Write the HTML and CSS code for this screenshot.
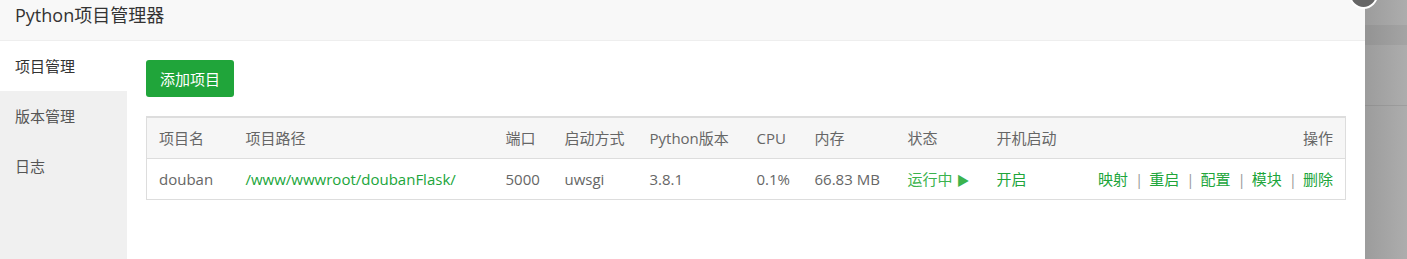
FILE: index.html
```html
<!DOCTYPE html>
<html lang="zh-CN">
<head>
    <meta charset="UTF-8">
    <meta name="viewport" content="width=device-width, initial-scale=1.0">
    <title>Python项目管理器</title>
    <link rel="stylesheet" href="styles.css">
</head>
<body>
    <div class="page">
        <div class="layer">
            <div class="layer-title">Python项目管理器</div>
            <div class="layer-body">
                <ul class="side-menu">
                    <li class="active">项目管理</li>
                    <li>版本管理</li>
                    <li>日志</li>
                </ul>
                <div class="main">
                    <button class="btn-add">添加项目</button>
                    <table class="project-table">
                        <thead>
                            <tr>
                                <th class="c-name">项目名</th>
                                <th class="c-path">项目路径</th>
                                <th class="c-port">端口</th>
                                <th class="c-run">启动方式</th>
                                <th class="c-ver">Python版本</th>
                                <th class="c-cpu">CPU</th>
                                <th class="c-mem">内存</th>
                                <th class="c-state">状态</th>
                                <th class="c-boot">开机启动</th>
                                <th class="c-ops">操作</th>
                            </tr>
                        </thead>
                        <tbody>
                            <tr>
                                <td>douban</td>
                                <td><a class="link" href="#">/www/wwwroot/doubanFlask/</a></td>
                                <td>5000</td>
                                <td>uwsgi</td>
                                <td>3.8.1</td>
                                <td>0.1%</td>
                                <td>66.83 MB</td>
                                <td><span class="running">运行中 <span class="play">&#9654;</span></span></td>
                                <td><a class="link" href="#">开启</a></td>
                                <td class="c-ops">
                                    <a class="link" href="#">映射</a><span class="sep">|</span><a class="link" href="#">重启</a><span class="sep">|</span><a class="link" href="#">配置</a><span class="sep">|</span><a class="link" href="#">模块</a><span class="sep">|</span><a class="link" href="#">删除</a>
                                </td>
                            </tr>
                        </tbody>
                    </table>
                </div>
            </div>
            <span class="layer-close"></span>
        </div>
        <div class="backdrop">
            <div class="bd-band"></div>
            <div class="bd-line"></div>
        </div>
    </div>
</body>
</html>
```

FILE: styles.css
```css
*{
    margin: 0;
    padding: 0;
    box-sizing: border-box;
}
body{
    font-family: "Open Sans", "Noto Sans CJK SC", sans-serif;
    font-size: 15px;
    color: #666;
    overflow: hidden;
}
.page{
    display: flex;
    height: 259px;
}
.layer{
    position: relative;
    z-index: 2;
    width: 1365px;
    background: #fff;
    display: flex;
    flex-direction: column;
}
.layer-title{
    height: 41px;
    line-height: 30px;
    padding-left: 15px;
    font-size: 18px;
    color: #333;
    background: #f8f8f8;
    border-bottom: 1px solid #eee;
}
.layer-close{
    position: absolute;
    top: -20px;
    right: -13px;
    width: 29px;
    height: 29px;
    border-radius: 50%;
    background: #666;
    border: 2px solid #fff;
}
.layer-body{
    flex: 1;
    display: flex;
}
.side-menu{
    list-style: none;
    width: 127px;
    background: #f0f0f0;
}
.side-menu li{
    height: 50px;
    line-height: 50px;
    padding-left: 15px;
    color: #555;
}
.side-menu li.active{
    background: #fff;
    color: #333;
}
.main{
    flex: 1;
    padding: 19px 19px 0 19px;
}
.btn-add{
    display: block;
    width: 88px;
    height: 37px;
    background: #20a53a;
    color: #fff;
    border: none;
    border-radius: 3px;
    font-family: inherit;
    font-size: 15px;
}
.project-table{
    margin-top: 19px;
    width: 1200px;
    border-collapse: collapse;
    border: 1px solid #ddd;
    white-space: nowrap;
}
.project-table th{
    height: 41px;
    background: #f6f6f6;
    font-weight: normal;
    text-align: left;
    padding: 0 12px;
    border-top: 2px solid #ddd;
    border-bottom: 1px solid #ddd;
}
.project-table td{
    height: 41px;
    padding: 0 12px;
    border-bottom: 1px solid #ddd;
}
.c-name{ width: 87px; }
.c-path{ width: 260px; }
.c-port{ width: 59px; }
.c-run{ width: 85px; }
.c-ver{ width: 107px; }
.c-cpu{ width: 58px; }
.c-mem{ width: 93px; }
.c-state{ width: 89px; }
.c-boot{ width: 90px; }
.project-table .c-ops{
    text-align: right;
}
.link{
    color: #20a53a;
    text-decoration: none;
}
.running{
    color: #3bb34d;
}
.play{
    font-size: 13px;
}
.sep{
    color: #999;
    margin: 0 6px 0 7px;
}
.backdrop{
    position: relative;
    flex: 1;
    background: linear-gradient(to right, #9c9c9c, #adadad);
}
.bd-band{
    margin-top: 25px;
    height: 20px;
    background: rgba(0, 0, 0, 0.05);
}
.bd-line{
    margin-top: 60px;
    height: 1px;
    background: rgba(0, 0, 0, 0.08);
}
```
